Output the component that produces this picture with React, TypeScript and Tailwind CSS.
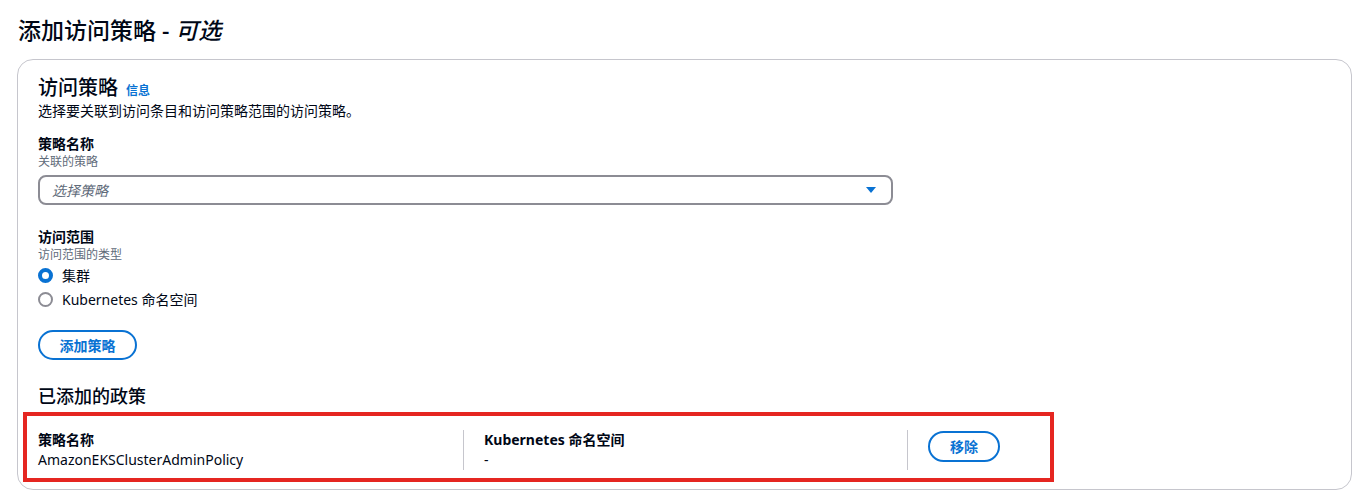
import { useState } from 'react';

const font = { fontFamily: '"Noto Sans", "Noto Sans CJK SC", sans-serif' };

function Radio({ checked, label, onClick }: { checked: boolean; label: string; onClick: () => void }) {
  return (
    <label className="flex items-center h-6 cursor-pointer" onClick={onClick}>
      {checked ? (
        <span className="w-[15px] h-[15px] rounded-full border-[4px] border-[#0972d3] bg-white" />
      ) : (
        <span className="w-[15px] h-[15px] rounded-full border-2 border-[#8c8c94] bg-white" />
      )}
      <span className="ml-[9px] text-[14px] text-[#000716]">{label}</span>
    </label>
  );
}

export default function App() {
  const [scope, setScope] = useState('cluster');

  return (
    <div className="w-[1367px] h-[504px] bg-white pt-[15px] pl-[17px] pr-[15px] overflow-hidden" style={font}>
      <h1 className="ml-px text-[23px] leading-[30px] font-medium text-[#000716]">
        添加访问策略 - <span className="italic">可选</span>
      </h1>

      <div className="mt-[14px] border border-[#c6c6cd] rounded-2xl px-5 pt-[15px] pb-[19px]">
        <div className="flex items-baseline">
          <h2 className="text-[20px] leading-[26px] font-medium text-[#000716]">访问策略</h2>
          <a className="ml-2 text-[12px] font-bold text-[#0972d3]">信息</a>
        </div>
        <p className="text-[14px] leading-5 text-[#000716]">选择要关联到访问条目和访问策略范围的访问策略。</p>

        <div className="mt-[13px]">
          <div className="text-[14px] leading-5 font-bold text-[#000716]">策略名称</div>
          <div className="text-[12px] leading-4 text-[#5f6b7a]">关联的策略</div>
          <div className="mt-[5px] w-[855px] h-[30px] border-2 border-[#8c8c94] rounded-lg flex items-center justify-between pl-3 pr-[14px]">
            <span className="text-[14px] italic text-[#5f6b7a]">选择策略</span>
            <svg width="12" height="8" viewBox="0 0 12 8">
              <path d="M1 1h10L6 7z" fill="#0972d3" />
            </svg>
          </div>
        </div>

        <div className="mt-[22px]">
          <div className="text-[14px] leading-5 font-bold text-[#000716]">访问范围</div>
          <div className="text-[12px] leading-4 text-[#5f6b7a]">访问范围的类型</div>
          <Radio checked={scope === 'cluster'} label="集群" onClick={() => setScope('cluster')} />
          <Radio checked={scope === 'ns'} label="Kubernetes 命名空间" onClick={() => setScope('ns')} />
        </div>

        <button className="mt-[19px] w-[99px] h-[30px] rounded-full border-2 border-[#0972d3] text-[14px] font-bold text-[#0972d3]">
          添加策略
        </button>

        <h2 className="mt-[23px] text-[18px] leading-[26px] font-medium text-[#000716]">已添加的政策</h2>

        <div className="relative mt-[21px] flex">
          <div className="w-[426px] border-r border-[#c6c6cd]">
            <div className="text-[14px] leading-5 font-bold text-[#000716]">策略名称</div>
            <div className="text-[14px] leading-5 text-[#000716]">AmazonEKSClusterAdminPolicy</div>
          </div>
          <div className="w-[444px] pl-5 border-r border-[#c6c6cd]">
            <div className="text-[14px] leading-5 font-bold text-[#000716]">Kubernetes 命名空间</div>
            <div className="text-[14px] leading-5 text-[#000716]">-</div>
          </div>
          <div className="pl-5 pt-px">
            <button className="w-[72px] h-[31px] rounded-full border-2 border-[#0972d3] text-[14px] font-bold text-[#0972d3]">
              移除
            </button>
          </div>
          <div className="absolute left-[-15px] top-[-18px] w-[1031px] h-[70px] border-4 border-[#e52621] pointer-events-none" />
        </div>
      </div>
    </div>
  );
}
